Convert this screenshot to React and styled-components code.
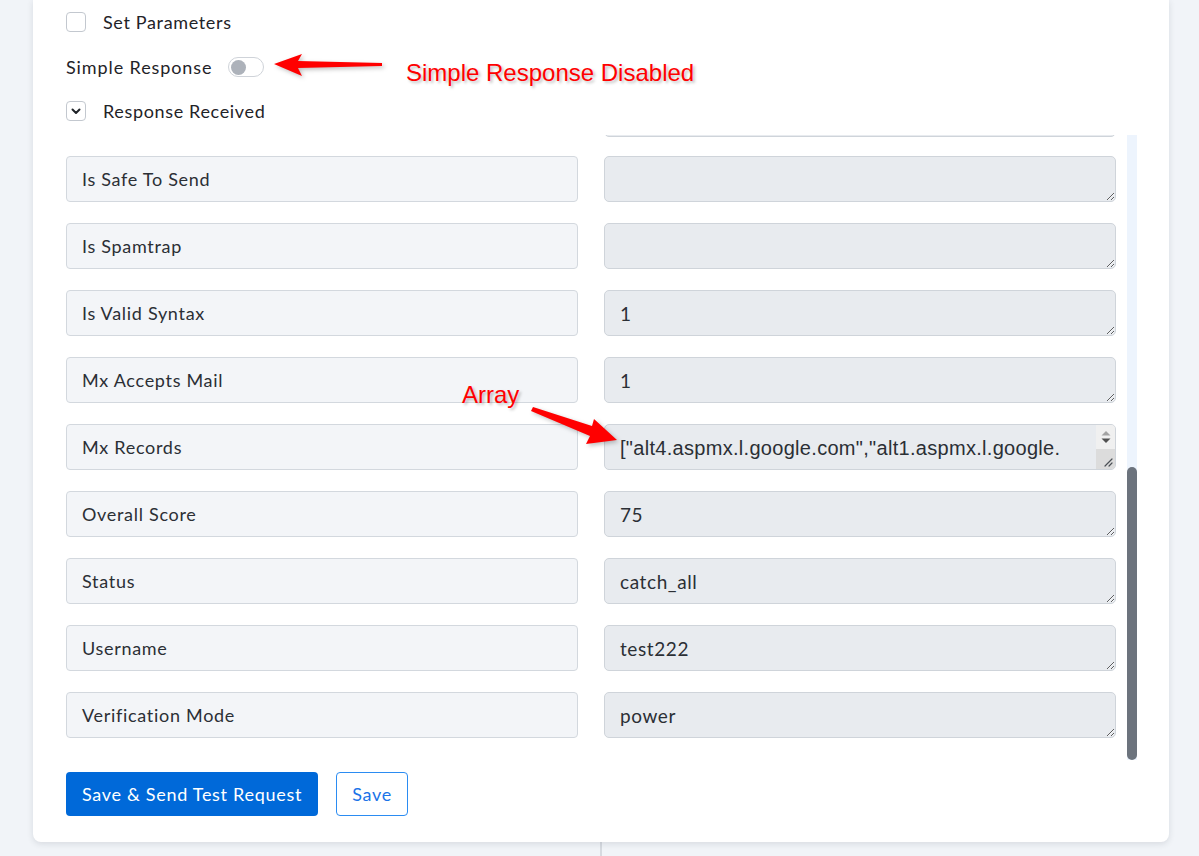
import React from 'react'
import styled, {createGlobalStyle} from 'styled-components'

const GlobalStyle = createGlobalStyle`
    html, body {
        margin: 0;
        padding: 0;
        background: #f1f4f8;
        font-family: Lato, "Open Sans", sans-serif;
        color: #1f2328;
    }
    * { box-sizing: border-box; }
`

// first entry is scrolled almost out of view: only its value box bottom edge shows
const fields = [
    {label: '', value: '', partial: true},
    {label: 'Is Safe To Send', value: ''},
    {label: 'Is Spamtrap', value: ''},
    {label: 'Is Valid Syntax', value: '1'},
    {label: 'Mx Accepts Mail', value: '1'},
    {label: 'Mx Records', value: '["alt4.aspmx.l.google.com","alt1.aspmx.l.google.com","aspmx.l.google.com","alt2.aspmx.l.google.com","alt3.aspmx.l.google.com"]', array: true},
    {label: 'Overall Score', value: '75'},
    {label: 'Status', value: 'catch_all'},
    {label: 'Username', value: 'test222'},
    {label: 'Verification Mode', value: 'power'},
]

const Grip = () => (
    <svg width="9" height="9" viewBox="0 0 9 9">
        <path d="M8 1 L1 8 M8 5 L5 8" stroke="#4b4f55" strokeWidth="1.2" strokeLinecap="round"/>
    </svg>
)

const ArrayValue = ({value}) => (
    <ValueWrap>
        <ValueBox readOnly value={value} $array/>
        <FakeBar>
            <BarButtons>
                <svg width="12" height="16" viewBox="0 0 12 16">
                    <path d="M1.5 6.5 L6 2 L10.5 6.5 Z" fill="#a3a3a3"/>
                    <path d="M1.5 9.5 L6 14 L10.5 9.5 Z" fill="#505050"/>
                </svg>
            </BarButtons>
            <BarCorner><Grip/></BarCorner>
        </FakeBar>
    </ValueWrap>
)

export default function App() {
    return (
        <Page>
            <GlobalStyle/>
            <Card>
                <OptionRow>
                    <CheckBox/>
                    <OptionText $indent>Set Parameters</OptionText>
                </OptionRow>
                <OptionRow>
                    <OptionText $wide>Simple Response</OptionText>
                    <Toggle><Knob/></Toggle>
                </OptionRow>
                <OptionRow>
                    <CheckBox>
                        <svg width="12" height="12" viewBox="0 0 12 12">
                            <path d="M2.5 4.5 L6 8 L9.5 4.5" fill="none" stroke="#1f2328" strokeWidth="2" strokeLinecap="round" strokeLinejoin="round"/>
                        </svg>
                    </CheckBox>
                    <OptionText $indent>Response Received</OptionText>
                </OptionRow>

                <ScrollArea>
                    <Rows>
                        {fields.map(({label, value, array, partial}, i) => (
                            <FieldRow key={i} $partial={partial}>
                                <LabelBox $hidden={partial}>{label}</LabelBox>
                                {array
                                    ? <ArrayValue value={value}/>
                                    : <ValueBox readOnly value={value}/>}
                            </FieldRow>
                        ))}
                    </Rows>
                    <Track>
                        <Thumb/>
                    </Track>
                </ScrollArea>

                <Buttons>
                    <PrimaryButton>Save &amp; Send Test Request</PrimaryButton>
                    <OutlineButton>Save</OutlineButton>
                </Buttons>

                <Note $top={60} $left={406}>Simple Response Disabled</Note>
                <Note $top={382} $left={462}>Array</Note>
                <ArrowSvg style={{left: 270, top: 50}} width="120" height="32" viewBox="0 0 120 32">
                    <polygon points="4,15 32,5 28,12 112,14 112,17 28,19 32,27" fill="#ff0000"/>
                </ArrowSvg>
                <ArrowSvg style={{left: 528, top: 402}} width="96" height="48" viewBox="0 0 96 48">
                    <polygon points="5,6 64,25 66,18 89,39 58,43 62,35 3,10" fill="#ff0000"/>
                </ArrowSvg>
            </Card>
            <Below>
                <BelowHalf/>
                <BelowHalf $line/>
            </Below>
        </Page>
    )
}

const Page = styled.div`
    width: 1199px;
    height: 856px;
    overflow: hidden;
`

const Card = styled.div`
    position: relative;
    margin: 0 30px 0 33px;
    background: #fff;
    border-radius: 0 0 8px 8px;
    box-shadow: 0 2px 6px rgba(30, 40, 60, 0.12);
    padding: 0 32px 26px 33px;
`

const OptionRow = styled.div`
    display: flex;
    align-items: center;
    height: 44px;
    gap: 16px;
    &:first-child { margin-top: -1px; height: 46px; }
`

const CheckBox = styled.div`
    width: 20px;
    height: 20px;
    border: 1px solid #c3c8cf;
    border-radius: 4px;
    background: #fff;
    display: flex;
    align-items: center;
    justify-content: center;
`

const OptionText = styled.span`
    font-size: 18px;
    letter-spacing: ${p => p.$wide ? '0.9px' : '0.65px'};
    color: #1f2328;
    margin-left: ${p => p.$indent ? '1px' : '0'};
`

const Toggle = styled.div`
    width: 36px;
    height: 20px;
    border: 1px solid #cfd3d9;
    border-radius: 10px;
    background: #fff;
    display: flex;
    align-items: center;
    padding-left: 2px;
`

const Knob = styled.div`
    width: 15px;
    height: 15px;
    border-radius: 50%;
    background: #adb2ba;
`

const ScrollArea = styled.div`
    display: flex;
    gap: 11px;
    height: 625px;
    margin-top: 2px;
`

const Rows = styled.div`
    flex: 1;
    display: flex;
    flex-direction: column;
    justify-content: flex-end;
    gap: 21px;
    overflow: hidden;
    padding-bottom: 22px;
`

const FieldRow = styled.div`
    display: flex;
    gap: 26px;
    flex-shrink: 0;
    margin-bottom: ${p => p.$partial ? '-2px' : '0'};
`

const LabelBox = styled.div`
    width: 512px;
    height: 46px;
    border: 1px solid #d3d8de;
    border-radius: 4px;
    background: #f3f5f8;
    font-size: 18px;
    letter-spacing: 0.7px;
    color: #2b2f35;
    padding: 0 15px;
    display: flex;
    align-items: center;
    visibility: ${p => p.$hidden ? 'hidden' : 'visible'};
`

const ValueWrap = styled.div`
    position: relative;
    width: 512px;
    height: 46px;
`

const ValueBox = styled.textarea`
    display: block;
    width: 512px;
    height: 46px;
    border: 1px solid #cfd4da;
    border-radius: 5px;
    background: #e8ebef;
    font-family: ${p => p.$array ? '"Liberation Sans", Arial, sans-serif' : 'Lato, sans-serif'};
    font-size: ${p => p.$array ? '20px' : '19px'};
    letter-spacing: ${p => p.$array ? '0.3px' : '0.6px'};
    line-height: ${p => p.$array ? '36px' : '24px'};
    color: #2b2f35;
    padding: ${p => p.$array ? '5px 46px 0 15px' : '11px 15px'};
    word-break: break-all;
    resize: vertical;
    outline: none;
    overflow: hidden;
    flex-shrink: 0;
    margin: 0;
`

const FakeBar = styled.div`
    position: absolute;
    top: 1px;
    right: 1px;
    bottom: 1px;
    width: 19px;
    display: flex;
    flex-direction: column;
    border-radius: 0 4px 4px 0;
    overflow: hidden;
`

const BarButtons = styled.div`
    height: 24px;
    background: #f0f0f0;
    display: flex;
    align-items: center;
    justify-content: center;
`

const BarCorner = styled.div`
    flex: 1;
    background: #dcdcdc;
    display: flex;
    align-items: flex-end;
    justify-content: flex-end;
    padding: 0 2px 2px 0;
`

const Track = styled.div`
    width: 10px;
    background: #edf4fd;
    display: flex;
    flex-direction: column;
    justify-content: flex-end;
`

const Thumb = styled.div`
    height: 293px;
    border-radius: 5px;
    background: #6c737d;
`

const Buttons = styled.div`
    display: flex;
    gap: 18px;
    margin-top: 12px;
`

const PrimaryButton = styled.button`
    height: 44px;
    padding: 0 16px;
    border: none;
    border-radius: 4px;
    background: #0069d9;
    color: #fff;
    font-family: Lato, sans-serif;
    font-size: 18px;
    letter-spacing: 0.7px;
`

const OutlineButton = styled.button`
    height: 44px;
    width: 72px;
    border: 1px solid #2b8cf2;
    border-radius: 4px;
    background: #fff;
    color: #1a73e8;
    font-family: Lato, sans-serif;
    font-size: 18px;
    letter-spacing: 0.7px;
`

const Note = styled.div`
    position: absolute;
    top: ${p => p.$top}px;
    left: ${p => p.$left - 33}px;
    font-family: "Liberation Sans", Arial, sans-serif;
    font-size: 24px;
    color: #ff0000;
    text-shadow: 2px 2px 3px rgba(0, 0, 0, 0.25);
    white-space: nowrap;
`

const ArrowSvg = styled.svg`
    position: absolute;
    margin-left: -33px;
    filter: drop-shadow(2px 2px 2px rgba(0, 0, 0, 0.25));
`

const Below = styled.div`
    display: flex;
    margin: 0 30px 0 33px;
    height: 20px;
`

const BelowHalf = styled.div`
    width: ${p => p.$line ? 'auto' : '567px'};
    flex: ${p => p.$line ? 1 : 'none'};
    border-left: ${p => p.$line ? '2px solid #d6dae0' : 'none'};
`
